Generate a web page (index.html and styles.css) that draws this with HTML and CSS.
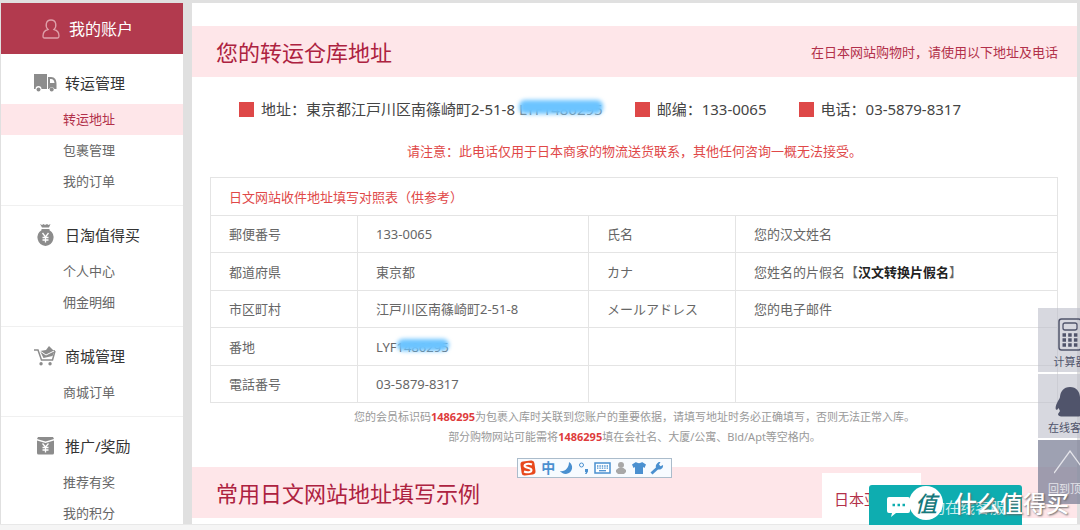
FILE: index.html
```html
<!DOCTYPE html>
<html lang="zh-CN">
<head>
<meta charset="utf-8">
<title>我的账户 - 转运地址</title>
<link rel="stylesheet" href="styles.css">
</head>
<body>
<div class="layout">
  <aside class="sidebar">
    <h1 class="account">
      <svg width="18" height="20" viewBox="0 0 18 20" fill="none" stroke="currentColor" stroke-width="1.300"><path d="M6 10.500C3 7.500 3.500 1 9 1s6 6.500 3 9.500c3.500.8 5 3 5 6.500 0 1.500-.5 2-1.500 2h-13C1.500 19 1 18.500 1 17c0-3.500 1.500-5.700 5-6.500z"/></svg>
      我的账户
    </h1>
    <nav>
      <section class="group">
        <h2 class="group-title">
          <svg width="24" height="20" viewBox="0 0 24 20" fill="#8c8c8c"><path d="M1 1h13v15H8.500a3 3 0 0 0-6 0H1z"/><path fill-rule="evenodd" d="M15 4h3c4 0 5.500 3 5.500 7v5h-2a3 3 0 0 0-5.500 0h-1zm2 2v4h4.500c-.3-2.500-1.500-4-3.500-4z"/><circle cx="5.500" cy="16.500" r="2"/><circle cx="18.700" cy="16.500" r="2"/></svg>
          转运管理
        </h2>
        <a class="item active" href="#">转运地址</a>
        <a class="item" href="#">包裹管理</a>
        <a class="item" href="#">我的订单</a>
      </section>
      <section class="group">
        <h2 class="group-title">
          <svg width="24" height="24" viewBox="0 0 24 24"><path fill="#8c8c8c" d="M7 1l2 1 1.500-1L12 2l2-1 1.500 1L17.500 1 16 4.500H9zM8.500 6h8v1.300A8.500 8.500 0 0 1 12.500 23 8.500 8.500 0 0 1 8.500 7.300z"/><path d="M9.500 10l3 4 3-4M9.500 14.500h6M9.500 17h6M12.500 14v5.500" fill="none" stroke="#fff" stroke-width="1.300"/></svg>
          日淘值得买
        </h2>
        <a class="item" href="#">个人中心</a>
        <a class="item" href="#">佣金明细</a>
      </section>
      <section class="group">
        <h2 class="group-title">
          <svg width="24" height="22" viewBox="0 0 24 22"><path d="M1 5h4l3.500 10h11L22 6" fill="none" stroke="#8c8c8c" stroke-width="1.500"/><path fill="#8c8c8c" d="M7 6l6-1 3-4 4 4h2l-2.500 6-9 2zM8 20.500a1.700 1.700 0 1 0 .1-3.400A1.700 1.700 0 0 0 8 20.500zM17 20.500a1.700 1.700 0 1 0 .1-3.400A1.700 1.700 0 0 0 17 20.500z"/><path d="M7 6l6 4 8-4" fill="none" stroke="#fff"/></svg>
          商城管理
        </h2>
        <a class="item" href="#">商城订单</a>
      </section>
      <section class="group">
        <h2 class="group-title">
          <svg width="24" height="20" viewBox="0 0 24 20"><path fill="#8c8c8c" d="M5 1h15l1 2-8.500 2.500L4 3zM4 4.500L12.500 7 21 4.500V17a1.500 1.500 0 0 1-1.500 1.500h-14A1.500 1.500 0 0 1 4 17z"/><path d="M9.500 7.500l3 3.500 3-3.500M9.500 11.500h6M9.500 14h6M12.500 11v5.500" fill="none" stroke="#fff" stroke-width="1.300"/></svg>
          推广/奖励
        </h2>
        <a class="item" href="#">推荐有奖</a>
        <a class="item" href="#">我的积分</a>
      </section>
    </nav>
  </aside>

  <main class="content">
    <header class="band">
      <h2 class="band-title">您的转运仓库地址</h2>
      <p class="band-note">在日本网站购物时，请使用以下地址及电话</p>
    </header>

    <ul class="facts">
      <li class="fact">地址：東京都江戸川区南篠崎町2-51-8 <span class="masked masked-full">LYF1486295</span></li>
      <li class="fact">邮编：133-0065</li>
      <li class="fact">电话：03-5879-8317</li>
    </ul>
    <p class="warning">请注意：此电话仅用于日本商家的物流送货联系，其他任何咨询一概无法接受。</p>

    <table class="form-table">
      <colgroup><col class="col-label"><col class="col-value"><col class="col-label"><col></colgroup>
      <thead><tr><th colspan="4">日文网站收件地址填写对照表（供参考）</th></tr></thead>
      <tbody>
        <tr><td>郵便番号</td><td>133-0065</td><td>氏名</td><td>您的汉文姓名</td></tr>
        <tr><td>都道府県</td><td>東京都</td><td>カナ</td><td>您姓名的片假名<a class="convert" href="#">【<b>汉文转换片假名</b>】</a></td></tr>
        <tr><td>市区町村</td><td>江戸川区南篠崎町2-51-8</td><td>メールアドレス</td><td>您的电子邮件</td></tr>
        <tr><td>番地</td><td>LYF<span class="masked">1486295</span></td><td></td><td></td></tr>
        <tr><td>電話番号</td><td>03-5879-8317</td><td></td><td></td></tr>
      </tbody>
    </table>

    <div class="notes">
      <p>您的会员标识码<b>1486295</b>为包裹入库时关联到您账户的重要依据，请填写地址时务必正确填写，否则无法正常入库。</p>
      <p>部分购物网站可能需将<b>1486295</b>填在会社名、大厦/公寓、Bld/Apt等空格内。</p>
    </div>

    <header class="band">
      <h2 class="band-title">常用日文网站地址填写示例</h2>
      <a class="tab" href="#">日本亚马逊</a>
    </header>
  </main>
</div>
<footer class="page-foot"></footer>

<div class="ime">
  <svg width="18" height="18" viewBox="0 0 18 18"><rect x="2" y="2" width="14" height="14" rx="3" fill="#e8481c" transform="rotate(-8 9 9)"/><path d="M13 5.500C9 4 5.500 5 5.500 7s7 1.500 7 4-4 3-7.500 1.500" fill="none" stroke="#fff" stroke-width="2"/></svg>
  <span class="ime-mode">中</span>
  <svg width="14" height="14" viewBox="0 0 14 14"><path fill="#4a90d0" d="M9 1c5 3 4 11-3 12-3 0-5-1.500-6-3 5 1 9-3 9-9z"/></svg>
  <svg width="12" height="14" viewBox="0 0 12 14"><circle cx="3.500" cy="4" r="2" fill="none" stroke="#4a90d0"/><path fill="#4a90d0" d="M7 8h3v2.500L8.500 13H7l1-2H7z"/></svg>
  <svg width="17" height="12" viewBox="0 0 17 12"><rect x="1" y="1" width="15" height="10" fill="#fff" stroke="#4a90d0" stroke-width="1.500"/><path d="M3 4h11M3 6.200h11" stroke="#4a90d0" stroke-width="1.300" stroke-dasharray="1.400 1"/><path d="M5 8.700h7" stroke="#4a90d0" stroke-width="1.300"/></svg>
  <svg width="12" height="14" viewBox="0 0 12 14" fill="#a8a8a8"><circle cx="6" cy="4" r="3"/><path d="M3.500 7h5L11 9v2l-2 2H3l-2-2V9z"/></svg>
  <svg width="14" height="12" viewBox="0 0 14 12"><path fill="#4a90d0" d="M4 0c1 1.500 5 1.500 6 0l4 2.500L12.500 6 11 5v7H3V5L1.500 6 0 2.500z"/></svg>
  <svg width="14" height="14" viewBox="0 0 14 14"><path d="M1.500 12.500L7.500 7" stroke="#4a90d0" stroke-width="3"/><path fill="#4a90d0" d="M10.500 1L9 3.500l1.500 1.700L13 4c.5 3-2 5-4.500 4.500S5 5.500 6.500 3.200 9 .8 10.500 1z"/></svg>
</div>

<div class="tools">
  <button class="tool" type="button">
    <svg width="24" height="33" viewBox="0 0 24 33"><rect x="1" y="1" width="22" height="31" rx="2.500" fill="none" stroke="#50546b" stroke-width="1.500"/><rect x="5" y="5" width="14" height="7" rx="2" fill="none" stroke="#50546b" stroke-width="1.300"/><path d="M4.500 17h15.500M4.500 22h15.500M4.500 27h15.500" stroke="#50546b" stroke-width="3.500" stroke-dasharray="3.500 2.200"/></svg>
    计算器
  </button>
  <button class="tool" type="button">
    <svg width="30" height="30" viewBox="0 0 30 30"><path fill="#50546b" d="M15 0c6.500 0 9.500 4.500 10 10 .2 1.500 1.200 2.500 2 4 2 3.500 3 7 2 8.500-.8 1-2-.5-2.500-1.500L25 24l2 3c0 2-2 2.500-5 2.500H8C5 29.500 3 29 3 27l2-3-1.500-3C3 22 1.800 23.500 1 22.500 0 21 1 17.500 3 14c.8-1.500 1.800-2.500 2-4C5.500 4.500 8.500 0 15 0z"/></svg>
    在线客服
  </button>
  <button class="tool tool-top" type="button">
    <svg width="32" height="24" viewBox="0 0 32 24"><path d="M0 23L16 1l16 22" fill="none" stroke="#e4e4ea" stroke-width="1.300"/></svg>
    回到顶部
  </button>
</div>

<button class="chat" type="button">
  <svg width="23" height="20" viewBox="0 0 23 20"><path fill="#fff" d="M2 0h19a2 2 0 0 1 2 2v12a2 2 0 0 1-2 2H9l-5 4 1-4H2a2 2 0 0 1-2-2V2a2 2 0 0 1 2-2z"/><path d="M5.500 8h13" stroke="#0eadb0" stroke-width="2.500" stroke-dasharray="2.500 2.500"/></svg>
  咨询在线客服
</button>
<div class="watermark"><span class="seal">值</span>什么值得买</div>
</body>
</html>
```
FILE: styles.css
```css
* { box-sizing: border-box; }

body {
  display: flex;
  flex-direction: column;
  height: 100vh;
  margin: 0;
  overflow: hidden;
  background: #e0e0e0;
  color: #444;
  font: 13px/20px "Noto Sans", "Noto Sans CJK SC", sans-serif;
}

h1, h2, p, ul { margin: 0; padding: 0; font-weight: 400; }
a { color: inherit; text-decoration: none; }
button { border: 0; font: inherit; cursor: pointer; }

.layout {
  display: flex;
  flex: 1;
  gap: 9px;
  min-height: 0;
  padding: 3px 3px 0 1px;
  overflow: hidden;
}

.page-foot {
  flex: none;
  height: 6px;
  border-top: 1px solid #e8e8e8;
  background: #f5f5f5;
}

.sidebar { flex: none; width: 182px; overflow: hidden; background: #fff; }

.account {
  display: flex;
  align-items: center;
  gap: 9px;
  height: 51px;
  padding-left: 41px;
  background: #b23a4e;
  color: #fff;
  font-size: 16px;
}
.account svg { color: #dfa0aa; }

.group { padding: 8px 0; border-bottom: 1px solid #f0f0f0; }
.group-title {
  display: flex;
  align-items: center;
  gap: 8px;
  height: 42px;
  padding-left: 32px;
  color: #333;
  font-size: 15px;
}
.item {
  display: block;
  padding-left: 62px;
  color: #666;
  line-height: 31px;
}
.item.active { background: #fee6e9; color: #b2304a; }

.content { flex: 1; min-width: 0; padding-top: 23px; overflow: hidden; background: #fff; }

.band {
  display: flex;
  align-items: center;
  justify-content: space-between;
  height: 51px;
  padding: 0 19px 0 24px;
  background: #fee6e9;
  color: #b2304a;
}
.band-title { color: #ad2240; font-size: 22px; line-height: 32px; }

.tab {
  align-self: flex-end;
  height: 45px;
  margin-right: 137px;
  padding: 0 12px;
  background: #fff;
  font-size: 15px;
  line-height: 52px;
}

.facts {
  display: flex;
  gap: 32px;
  padding: 22px 0 0 47px;
  list-style: none;
  font-size: 15px;
  white-space: nowrap;
}
.fact { display: flex; align-items: center; white-space: pre; }
.fact::before {
  width: 15px;
  height: 15px;
  margin-right: 7px;
  background: #de4848;
  content: "";
}

.masked { position: relative; }
.masked::after {
  position: absolute;
  inset: 1px 0 5px;
  border-radius: 6px;
  background: #6cc4ff;
  filter: blur(2px);
  content: "";
}
.masked-full { color: #777; }

.warning { padding: 22px 0 16px; color: #e04848; text-align: center; }

.form-table {
  width: calc(100% - 37px);
  margin-left: 18px;
  border-collapse: collapse;
  table-layout: fixed;
  color: #666;
}
.form-table th, .form-table td {
  height: 38px;
  padding: 0 18px;
  border: 1px solid #e4e4e4;
  text-align: left;
}
.form-table tr:nth-child(odd) td { height: 37px; }
.form-table th { color: #e04848; font-weight: 400; }
.col-label { width: 147px; }
.col-value { width: 231px; }
.convert b { color: #222; }

.notes { padding: 4px 0 20px; color: #999; font-size: 11px; text-align: center; }
.notes b { color: #de3c3c; }

.ime {
  position: absolute;
  top: 458px;
  left: 517px;
  display: flex;
  align-items: center;
  justify-content: space-between;
  width: 155px;
  height: 20px;
  padding: 0 7px 0 1px;
  border: 1px solid #abbccb;
  background: #f7fbff;
}
.ime-mode { color: #4a90d0; font-size: 14px; font-weight: 700; line-height: 18px; }

.tools {
  position: absolute;
  top: 308px;
  right: 0;
  display: grid;
  gap: 2px;
  width: 42px;
  overflow: hidden;
}
.tool {
  display: flex;
  flex-direction: column;
  align-items: center;
  justify-content: flex-end;
  gap: 2px;
  width: 64px;
  height: 64px;
  padding: 0 0 2px;
  background: rgba(188, 190, 202, .6);
  color: #50546b;
  font-size: 11px;
  line-height: 17px;
}
.tool-top {
  gap: 6px;
  padding-bottom: 7px;
  background: rgba(126, 130, 152, .75);
  color: #e4e4ea;
}

.chat {
  position: absolute;
  right: 58px;
  bottom: 5px;
  display: flex;
  align-items: center;
  gap: 5px;
  width: 153px;
  height: 40px;
  padding: 4px 0 0 18px;
  border-radius: 3px 3px 0 0;
  background: #0eadb0;
  color: #c5eced;
  font-size: 15px;
  white-space: nowrap;
}

.watermark {
  position: absolute;
  right: 11px;
  bottom: 10px;
  display: flex;
  align-items: center;
  gap: 11px;
  color: #fff;
  font-size: 23px;
  font-weight: 500;
  line-height: 34px;
  text-shadow: 1px 1px 2px #666;
  white-space: nowrap;
}
.seal {
  width: 34px;
  border-radius: 50%;
  background: #fff;
  color: #16797c;
  font-size: 22px;
  font-style: italic;
  text-align: center;
  text-shadow: none;
}
```
